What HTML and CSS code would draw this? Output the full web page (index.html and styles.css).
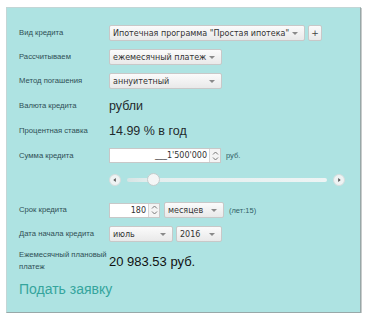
FILE: index.html
```html
<!DOCTYPE html>
<html lang="ru">
<head>
<meta charset="utf-8">
<link rel="stylesheet" href="styles.css">
</head>
<body>
<div class="panel">
  <div class="row r24">
    <div class="label">Вид кредита</div>
    <div class="value">
      <div class="select w-main"><span>Ипотечная программа "Простая ипотека"</span><i class="arrow"></i></div>
      <div class="btn-plus">+</div>
    </div>
  </div>
  <div class="row r24">
    <div class="label">Рассчитываем</div>
    <div class="value">
      <div class="select w-mid"><span>ежемесячный платеж</span><i class="arrow"></i></div>
    </div>
  </div>
  <div class="row r24">
    <div class="label">Метод погашения</div>
    <div class="value">
      <div class="select w-mid"><span>аннуитетный</span><i class="arrow"></i></div>
    </div>
  </div>
  <div class="row r25">
    <div class="label">Валюта кредита</div>
    <div class="value big">рубли</div>
  </div>
  <div class="row r25">
    <div class="label">Процентная ставка</div>
    <div class="value big">14.99 % в год</div>
  </div>
  <div class="row r25">
    <div class="label">Сумма кредита</div>
    <div class="value">
      <div class="num w-sum"><span class="num-text">___1'500'000</span><span class="spin"><svg width="7" height="12" viewBox="0 0 7 12"><path d="M1 4.5 L3.5 2 L6 4.5" fill="none" stroke="#777" stroke-width="1"/><path d="M1 7.5 L3.5 10 L6 7.5" fill="none" stroke="#777" stroke-width="1"/></svg></span></div>
      <span class="unit">руб.</span>
    </div>
  </div>
  <div class="row r24 gap-after">
    <div class="label"></div>
    <div class="value slider">
      <span class="sbtn"><svg width="12" height="12" viewBox="0 0 12 12"><path d="M7 3.5 L4 6 L7 8.5 Z" fill="#555"/></svg></span>
      <span class="track"><span class="thumb"></span></span>
      <span class="sbtn"><svg width="12" height="12" viewBox="0 0 12 12"><path d="M5 3.5 L8 6 L5 8.5 Z" fill="#555"/></svg></span>
    </div>
  </div>
  <div class="row r24">
    <div class="label">Срок кредита</div>
    <div class="value">
      <div class="num w-term"><span class="num-text">180</span><span class="spin"><svg width="7" height="12" viewBox="0 0 7 12"><path d="M1 4.5 L3.5 2 L6 4.5" fill="none" stroke="#777" stroke-width="1"/><path d="M1 7.5 L3.5 10 L6 7.5" fill="none" stroke="#777" stroke-width="1"/></svg></span></div>
      <div class="select w-months"><span>месяцев</span><i class="arrow"></i></div>
      <span class="unit">(лет:15)</span>
    </div>
  </div>
  <div class="row r24">
    <div class="label">Дата начала кредита</div>
    <div class="value">
      <div class="select w-month"><span>июль</span><i class="arrow"></i></div>
      <div class="select w-year"><span>2016</span><i class="arrow"></i></div>
    </div>
  </div>
  <div class="row r30">
    <div class="label two">Ежемесячный плановый платеж</div>
    <div class="value big2">20 983.53 руб.</div>
  </div>
  <div class="row r26">
    <a class="apply" href="#">Подать заявку</a>
  </div>
</div>
</body>
</html>
```
FILE: styles.css
```css
html, body {
  margin: 0;
  padding: 0;
  background: #ffffff;
}
body {
  padding: 7px 0 0 6px;
  font-family: "Liberation Sans", Arial, sans-serif;
}
.panel {
  box-sizing: border-box;
  width: 355px;
  height: 306px;
  background: #aee3e2;
  border: 1px solid #c3d6d6;
  border-right-color: #98a8a8;
  border-bottom-color: #98a8a8;
  box-shadow: 1px 1px 0 #c8cccc;
  padding: 13px 0 0 12px;
  display: flex;
  flex-direction: column;
}
.row {
  display: flex;
  align-items: center;
}
.r24 { height: 24px; }
.r25 { height: 25px; }
.r26 { height: 26px; }
.r30 { height: 30px; }
.gap-after { margin-bottom: 6px; }
.label {
  width: 90px;
  flex: none;
  font-size: 7.7px;
  color: #2f4f55;
  line-height: 12px;
}
.label.two {
  width: 90px;
  line-height: 12px;
}
.value {
  display: flex;
  align-items: center;
  gap: 3px;
  color: #1f2a2c;
}
.big {
  font-size: 12.5px;
}
.big2 {
  font-size: 13px;
  color: #111;
}
.select {
  box-sizing: border-box;
  height: 16px;
  border: 1px solid #c8c8c8;
  border-radius: 2px;
  background: linear-gradient(#fbfbfb, #e9e9e9);
  display: flex;
  align-items: center;
  justify-content: space-between;
  padding: 0 6px 0 3px;
  font-family: "DejaVu Sans", Verdana, sans-serif;
  font-size: 8px;
  color: #333;
  white-space: nowrap;
}
.arrow {
  width: 0;
  height: 0;
  border-left: 3px solid transparent;
  border-right: 3px solid transparent;
  border-top: 3px solid #8a8a8a;
}
.w-main { width: 196px; }
.w-mid { width: 113px; }
.w-months { width: 60px; margin-left: 1px; }
.w-month { width: 64px; }
.w-year { width: 46px; margin-left: 0; }
.btn-plus {
  box-sizing: border-box;
  width: 14px;
  height: 16px;
  border: 1px solid #c8c8c8;
  border-radius: 2px;
  background: linear-gradient(#fbfbfb, #e9e9e9);
  font-family: "DejaVu Sans", sans-serif;
  font-size: 9px;
  color: #444;
  display: flex;
  align-items: center;
  justify-content: center;
}
.num {
  box-sizing: border-box;
  height: 15px;
  border: 1px solid #c8c8c8;
  background: #fff;
  display: flex;
  align-items: center;
}
.num-text {
  flex: 1;
  text-align: right;
  font-family: "DejaVu Sans", Verdana, sans-serif;
  font-size: 8px;
  color: #333;
  padding-right: 2px;
}
.spin {
  box-sizing: border-box;
  width: 11px;
  height: 13px;
  border-left: 1px solid #d6d6d6;
  background: #f4f4f4;
  display: flex;
  align-items: center;
  justify-content: center;
}
.w-sum { width: 112px; }
.w-term { width: 51px; }
.unit {
  font-size: 7.5px;
  color: #2f5f66;
  margin-left: 2px;
}
.slider {
  gap: 0;
  width: 236px;
}
.sbtn {
  box-sizing: border-box;
  width: 12px;
  height: 12px;
  border-radius: 50%;
  background: #eef3f3;
  border: 1px solid #d5dddd;
  display: flex;
  align-items: center;
  justify-content: center;
}
.sbtn svg { display: block; }
.track {
  position: relative;
  flex: 1;
  height: 4px;
  margin: 0 6px;
  border-radius: 2px;
  background: linear-gradient(90deg, #d6e4e4 0, #e4eeee 12%, #edf4f4 100%);
}
.thumb {
  position: absolute;
  left: 20px;
  top: -5px;
  box-sizing: border-box;
  width: 13px;
  height: 13px;
  border-radius: 50%;
  background: #f4f6f6;
  border: 1px solid #c4cccc;
}
.apply {
  font-size: 14px;
  color: #35a59d;
  text-decoration: none;
}
```
